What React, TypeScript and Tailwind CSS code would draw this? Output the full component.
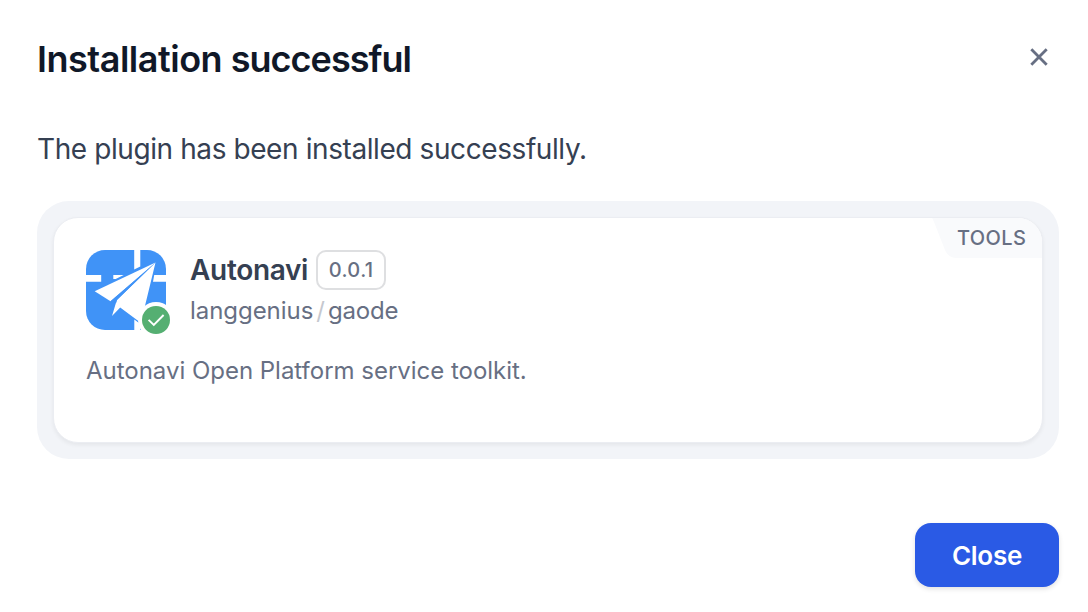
function PluginIcon() {
  return (
    <svg viewBox="0 0 88 88" className="h-[88px] w-[88px] shrink-0" aria-hidden="true">
      <defs>
        <clipPath id="tile">
          <rect width="80" height="80" rx="19" />
        </clipPath>
      </defs>
      <g clipPath="url(#tile)">
        <rect width="80" height="80" fill="#4093f7" />
        <g fill="#fff">
          <path d="M48.2 0h6.1v16.4l-6.1 3.2zM0 25.1h15.2v6.6H0zM27.3 25.1h10.4l-8 4h-2.4zM68.2 25.1H80v6.6H67zM48.3 69.6l6 4.4v6h-6z" />
          <path d="M69.5 12.5 8.7 41.2l15.8 10z" />
          <path d="M69.5 12.5 30.8 50 26 66l8.2-8.5L52 70.7l6.3-12z" />
        </g>
        <path d="M69.3 12.7 24.6 51.2l5.4 2 1-3.2z" fill="#4093f7" />
        <circle cx="70" cy="70" r="18" fill="#fff" />
      </g>
      <circle cx="70" cy="70" r="14" fill="#55af72" />
      <path d="m62.6 69.8 5.2 5.2 9.8-10" fill="none" stroke="#fff" strokeWidth="1.9" />
    </svg>
  );
}

export default function App() {
  return (
    <main className="flex h-[612px] w-[1088px] flex-col bg-white pt-9 pr-[29px] pl-[37px] font-['Inter','Liberation_Sans',sans-serif]">
      <header className="flex h-12 items-start justify-between">
        <h1 className="text-[36px] leading-[46px] font-semibold whitespace-nowrap text-[#101828]">
          <span className="tracking-[-0.48px]">Installation </span>
          <span className="tracking-[-0.98px]">successful</span>
        </h1>
        <button aria-label="Dismiss" className="mt-px flex size-10 items-center justify-center">
          <svg viewBox="0 0 18 18" className="size-[18px]" fill="none" stroke="#676f83" strokeWidth="2.8">
            <path d="m1.3 1.3 15.4 15.4M16.7 1.3 1.3 16.7" />
          </svg>
        </button>
      </header>

      <p className="mt-[45px] text-[28px] leading-10 tracking-[-0.41px] whitespace-nowrap text-[#354052]">
        The plugin has been installed successfully.
      </p>

      <section className="mt-8 h-[258px] rounded-[32px] bg-[#f2f4f8] p-4">
        <article className="relative h-[226px] overflow-hidden rounded-[25px] border border-[#ebedf2] bg-white pt-8 pl-8 shadow-[0_2px_4px_rgba(9,9,11,0.06)]">
          <div className="absolute top-0 right-0 flex h-10 w-[110px]">
            <svg viewBox="0 0 110 40" className="absolute inset-0 h-10 w-[110px]" aria-hidden="true">
              <path d="M0 0h110v40H25c-6 0-10-3-12-8L2 4C1 2 1 1 0 0z" fill="#f9fafc" />
            </svg>
            <span className="relative pl-[25px] text-[20px] leading-[41px] font-medium tracking-[0.4px] text-[#676f83]">
              TOOLS
            </span>
          </div>
          <div className="flex h-[88px] gap-4">
            <PluginIcon />
            <div>
              <div className="flex h-10 items-center gap-2">
                <h2 className="text-[28px] leading-10 font-semibold tracking-[-0.32px] text-[#354052]">Autonavi</h2>
                <span className="flex h-10 w-[70px] items-center justify-center rounded-[10px] border-2 border-[#dedfe1] text-[20px] font-medium tracking-[0.4px] text-[#676f83]">
                  0.0.1
                </span>
              </div>
              <div className="flex h-[42px] items-center text-[24px] text-[#676f83]">
                <span className="tracking-[-0.05px]">langgenius</span>
                <span className="ml-[3px] text-[#c5c8cf]">/</span>
                <span className="ml-[3px] tracking-[-0.2px]">gaode</span>
              </div>
            </div>
          </div>
          <p className="mt-[17px] text-[24px] leading-8 tracking-[-0.02px] whitespace-nowrap text-[#676f83]">
            Autonavi Open Platform service toolkit.
          </p>
        </article>
      </section>

      <footer className="mt-16 flex justify-end">
        <button className="h-16 w-36 rounded-2xl bg-[#2a5ae5] text-[26px] font-semibold tracking-[-0.25px] text-white shadow-[0_2px_5px_rgba(9,9,11,0.12)]">
          Close
        </button>
      </footer>
    </main>
  );
}
